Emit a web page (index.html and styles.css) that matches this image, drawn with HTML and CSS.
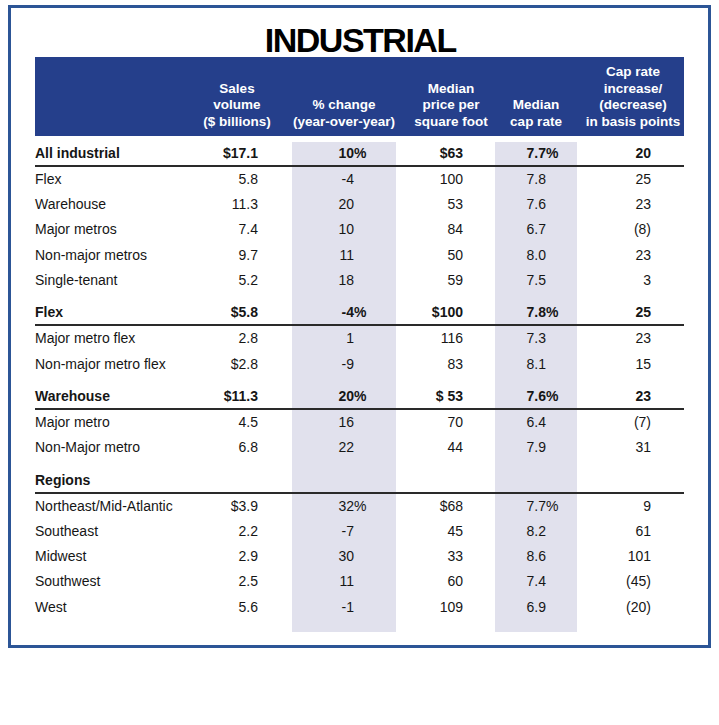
FILE: index.html
```html
<!DOCTYPE html>
<html lang="en">
<head>
<meta charset="utf-8">
<title>Industrial</title>
<link rel="stylesheet" href="styles.css">
</head>
<body>
<div class="box">
  <h1 class="title">INDUSTRIAL</h1>
  <div class="table">
    <div class="thead grid">
      <div class="th"></div>
      <div class="th">Sales<br>volume<br>($ billions)</div>
      <div class="th">% change<br>(year-over-year)</div>
      <div class="th th-price">Median<br>price per<br>square foot</div>
      <div class="th">Median<br>cap rate</div>
      <div class="th th-bp">Cap rate<br>increase/<br>(decrease)<br>in basis points</div>
    </div>
    <div class="tbody">
      <div class="grid grp first">
        <div class="c lab">All industrial</div><div class="c sv">$17.1</div><div class="c pc sh">10<span class="hang">%</span></div><div class="c pr">$63</div><div class="c cr sh">7.7<span class="hang">%</span></div><div class="c bp">20</div>
      </div>
      <div class="grid row"><div class="c lab">Flex</div><div class="c sv">5.8</div><div class="c pc sh">-4</div><div class="c pr">100</div><div class="c cr sh">7.8</div><div class="c bp">25</div></div>
      <div class="grid row"><div class="c lab">Warehouse</div><div class="c sv">11.3</div><div class="c pc sh">20</div><div class="c pr">53</div><div class="c cr sh">7.6</div><div class="c bp">23</div></div>
      <div class="grid row"><div class="c lab">Major metros</div><div class="c sv">7.4</div><div class="c pc sh">10</div><div class="c pr">84</div><div class="c cr sh">6.7</div><div class="c bp">(8)</div></div>
      <div class="grid row"><div class="c lab">Non-major metros</div><div class="c sv">9.7</div><div class="c pc sh">11</div><div class="c pr">50</div><div class="c cr sh">8.0</div><div class="c bp">23</div></div>
      <div class="grid row"><div class="c lab">Single-tenant</div><div class="c sv">5.2</div><div class="c pc sh">18</div><div class="c pr">59</div><div class="c cr sh">7.5</div><div class="c bp">3</div></div>

      <div class="grid grp">
        <div class="c lab">Flex</div><div class="c sv">$5.8</div><div class="c pc sh">-4<span class="hang">%</span></div><div class="c pr">$100</div><div class="c cr sh">7.8<span class="hang">%</span></div><div class="c bp">25</div>
      </div>
      <div class="grid row"><div class="c lab">Major metro flex</div><div class="c sv">2.8</div><div class="c pc sh">1</div><div class="c pr">116</div><div class="c cr sh">7.3</div><div class="c bp">23</div></div>
      <div class="grid row"><div class="c lab">Non-major metro flex</div><div class="c sv">$2.8</div><div class="c pc sh">-9</div><div class="c pr">83</div><div class="c cr sh">8.1</div><div class="c bp">15</div></div>

      <div class="grid grp">
        <div class="c lab">Warehouse</div><div class="c sv">$11.3</div><div class="c pc sh">20<span class="hang">%</span></div><div class="c pr">$ 53</div><div class="c cr sh">7.6<span class="hang">%</span></div><div class="c bp">23</div>
      </div>
      <div class="grid row"><div class="c lab">Major metro</div><div class="c sv">4.5</div><div class="c pc sh">16</div><div class="c pr">70</div><div class="c cr sh">6.4</div><div class="c bp">(7)</div></div>
      <div class="grid row"><div class="c lab">Non-Major metro</div><div class="c sv">6.8</div><div class="c pc sh">22</div><div class="c pr">44</div><div class="c cr sh">7.9</div><div class="c bp">31</div></div>

      <div class="grid grp">
        <div class="c lab">Regions</div><div class="c sv"></div><div class="c pc sh"></div><div class="c pr"></div><div class="c cr sh"></div><div class="c bp"></div>
      </div>
      <div class="grid row"><div class="c lab">Northeast/Mid-Atlantic</div><div class="c sv">$3.9</div><div class="c pc sh">32<span class="hang">%</span></div><div class="c pr">$68</div><div class="c cr sh">7.7<span class="hang">%</span></div><div class="c bp">9</div></div>
      <div class="grid row"><div class="c lab">Southeast</div><div class="c sv">2.2</div><div class="c pc sh">-7</div><div class="c pr">45</div><div class="c cr sh">8.2</div><div class="c bp">61</div></div>
      <div class="grid row"><div class="c lab">Midwest</div><div class="c sv">2.9</div><div class="c pc sh">30</div><div class="c pr">33</div><div class="c cr sh">8.6</div><div class="c bp">101</div></div>
      <div class="grid row"><div class="c lab">Southwest</div><div class="c sv">2.5</div><div class="c pc sh">11</div><div class="c pr">60</div><div class="c cr sh">7.4</div><div class="c bp">(45)</div></div>
      <div class="grid row last"><div class="c lab">West</div><div class="c sv">5.6</div><div class="c pc sh">-1</div><div class="c pr">109</div><div class="c cr sh">6.9</div><div class="c bp">(20)</div></div>
    </div>
  </div>
</div>
</body>
</html>
```

FILE: styles.css
```css
html, body {
  margin: 0;
  padding: 0;
  background: #ffffff;
}

body {
  font-family: "Liberation Sans", Arial, Helvetica, sans-serif;
  color: #161616;
}

.box {
  box-sizing: border-box;
  margin: 5px 0 0 8px;
  width: 703px;
  height: 643px;
  border: 3px solid #2c5596;
  padding: 15px 24px 0 24px;
}

.title {
  margin: 0;
  font-size: 34px;
  line-height: 34px;
  font-weight: 700;
  letter-spacing: -1.5px;
  text-align: center;
  color: #000;
  text-indent: 1.5px;
}

.grid {
  display: grid;
  grid-template-columns: 147px 110px 104px 99px 82px 107px;
}

.thead {
  background: #253f8b;
  height: 79px;
  color: #ffffff;
}

.th {
  align-self: end;
  text-align: center;
  font-size: 13.5px;
  font-weight: 700;
  line-height: 16.5px;
  padding-bottom: 6px;
}

.th-price {
  padding-left: 11px;
}

.th-bp {
  padding-left: 5px;
}

.tbody {
  margin-top: 6px;
}

.c {
  font-size: 14px;
  white-space: nowrap;
}

.row .c {
  height: 25.2px;
  line-height: 25.2px;
}

.grp {
  border-bottom: 2px solid #2a2a2a;
}

.grp .c {
  font-weight: 700;
  height: 23px;
  line-height: 23px;
  padding-top: 8.4px;
}

.grp.first .c {
  padding-top: 0;
}

.row.last .c {
  padding-bottom: 12.6px;
}

.sh {
  background: #e1e1ed;
}

.lab {
  text-align: left;
}

.sv {
  text-align: right;
  padding-right: 34px;
}

.pc {
  text-align: right;
  padding-right: 42px;
}

.pr {
  text-align: right;
  padding-right: 32px;
}

.cr {
  text-align: right;
  padding-right: 31px;
}

.bp {
  text-align: right;
  padding-right: 33px;
}

.hang {
  margin-right: -0.889em;
}
```
